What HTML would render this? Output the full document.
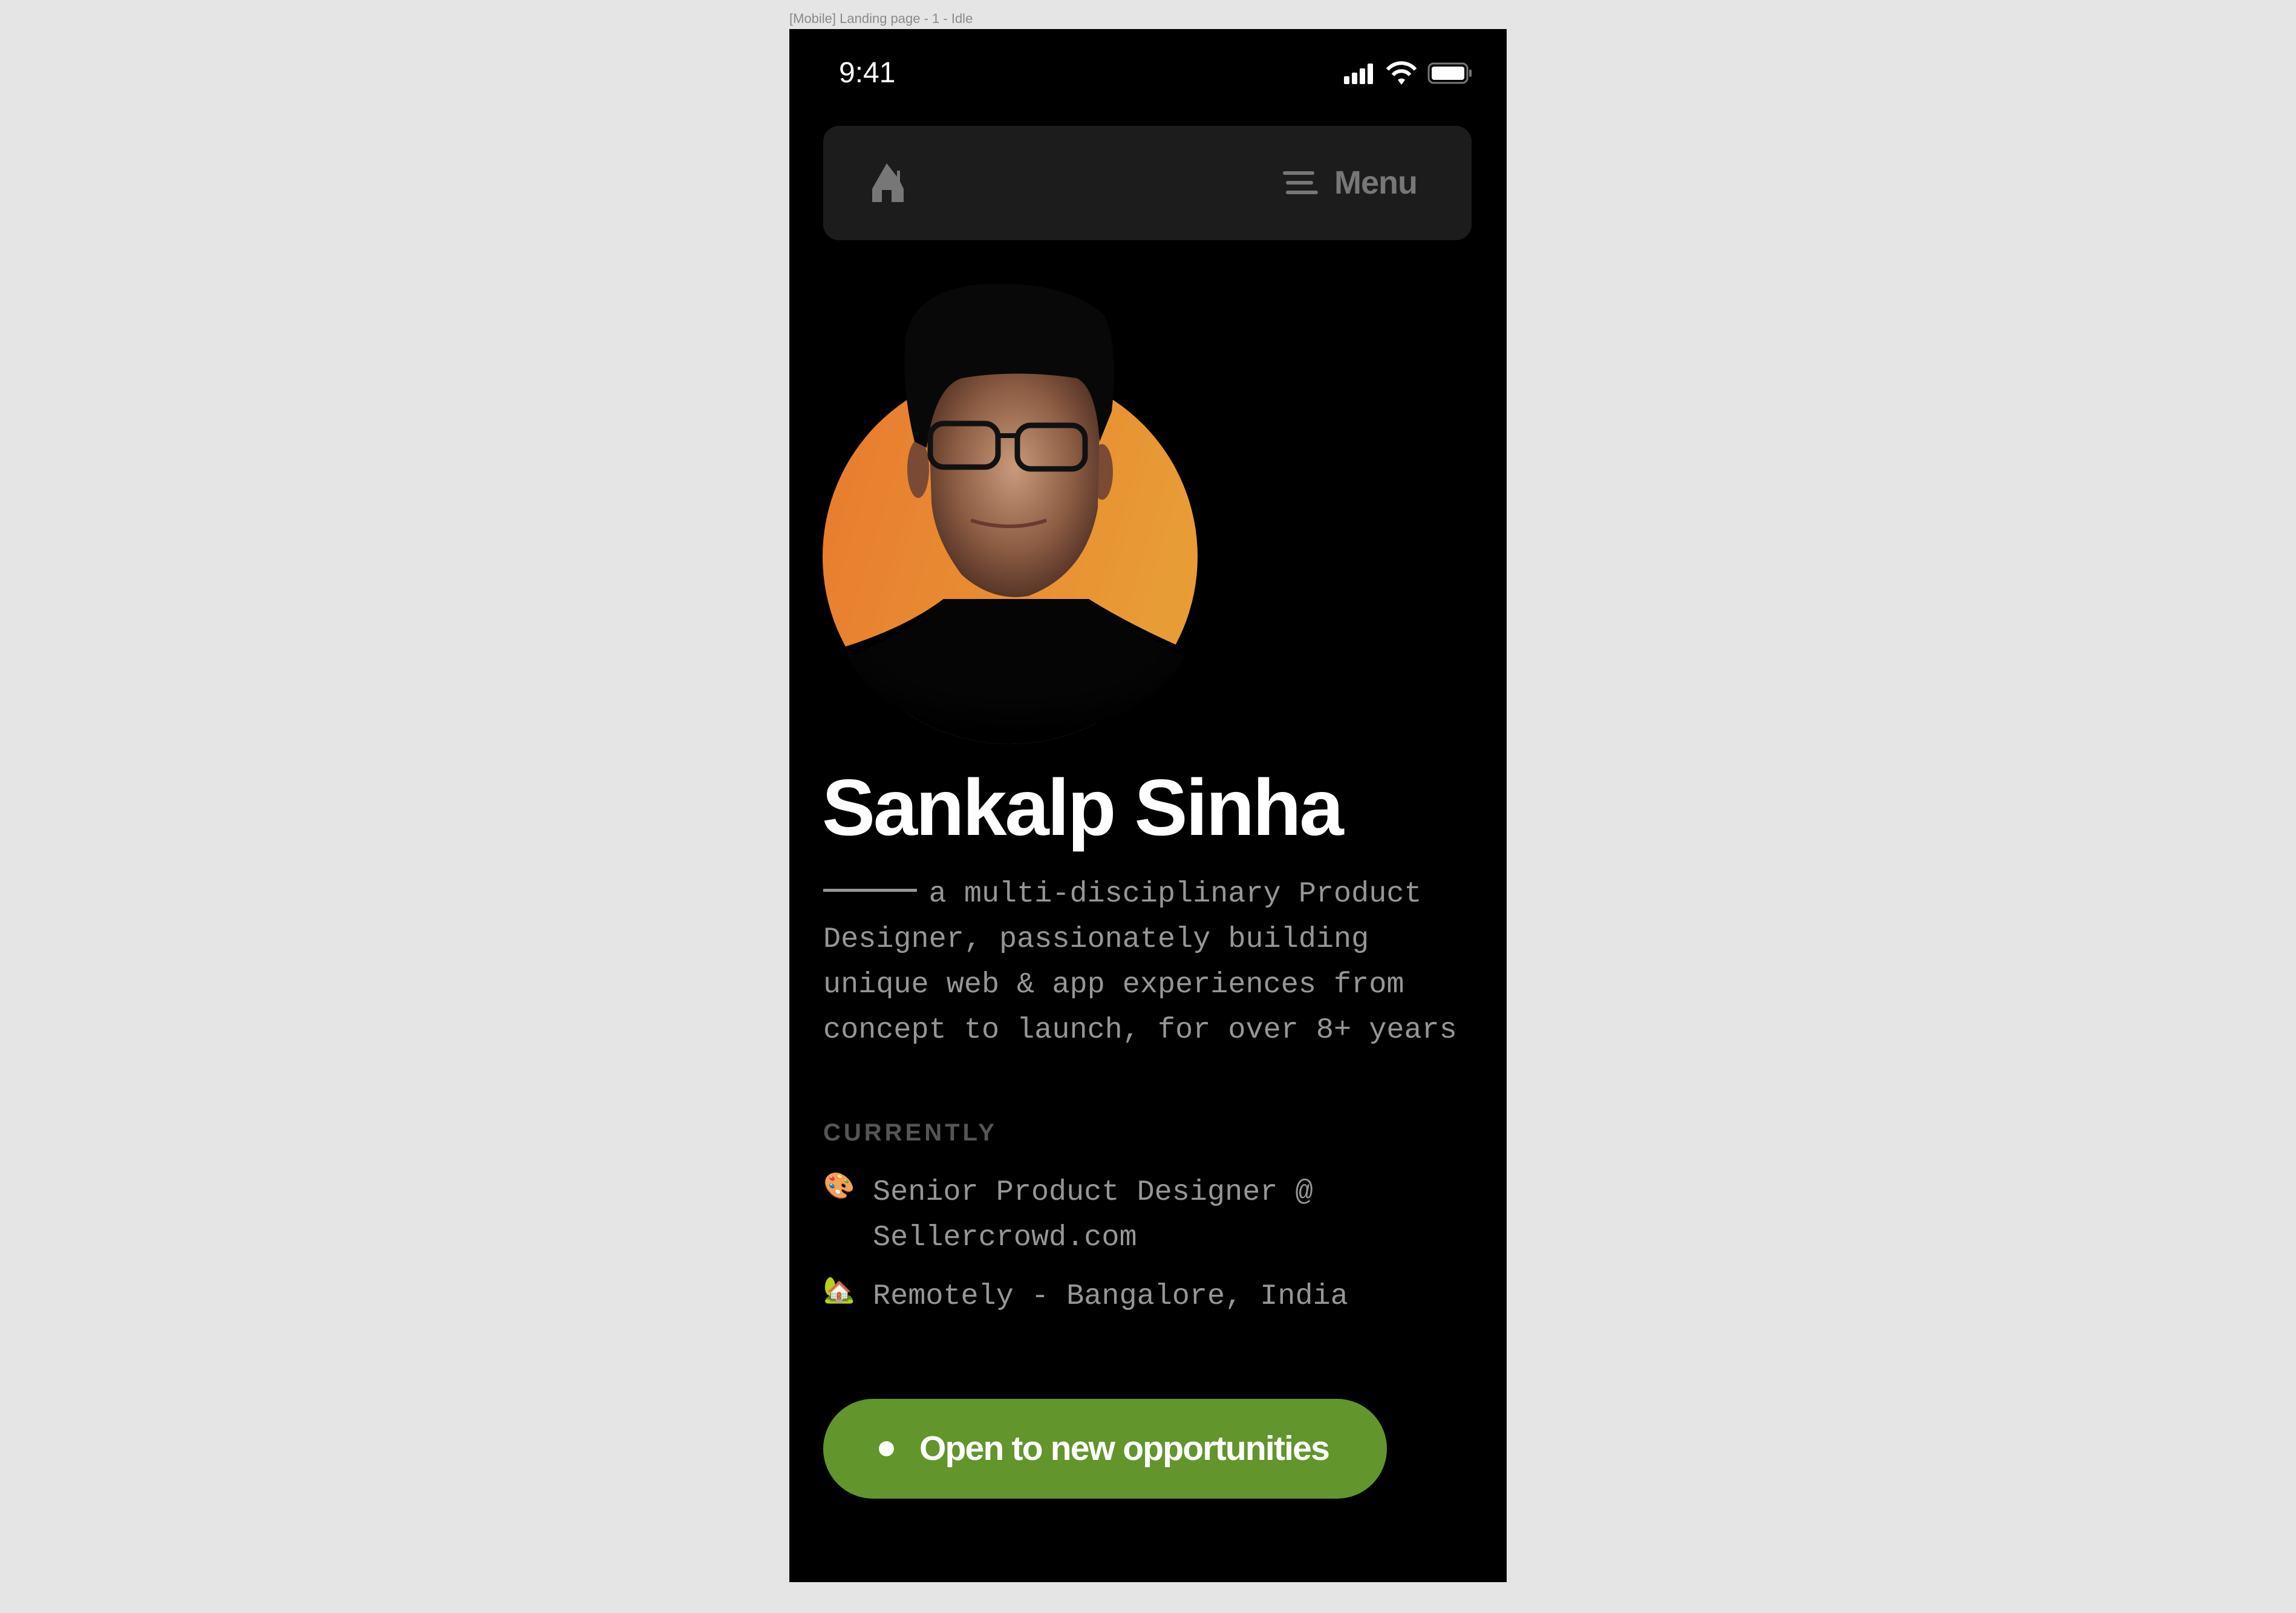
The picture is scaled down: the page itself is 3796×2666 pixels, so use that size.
<!DOCTYPE html>
<html><head><meta charset="utf-8"><style>
*{margin:0;padding:0;box-sizing:border-box}
html,body{width:3796px;height:2666px;background:#e5e5e5;overflow:hidden;position:relative;font-family:"Liberation Sans",sans-serif}
.abs{position:absolute}
.label{left:1305px;top:18px;font-size:22px;color:#8a8a8a;white-space:nowrap}
.phone{left:1305px;top:48px;width:1186px;height:2567px;background:#000}
.mono{font-family:"Liberation Mono",monospace;font-size:48.5px;color:#969696;white-space:pre}
</style></head><body>
<div class="abs label">[Mobile] Landing page - 1 - Idle</div>
<div class="abs phone"></div>
<div class="abs" style="left:1387px;top:93px;font-size:48px;color:#fff;line-height:56px">9:41</div>
<svg class="abs" style="left:2215px;top:100px" width="230" height="44" viewBox="0 0 230 44">
 <rect x="7" y="26" width="9" height="13" rx="2" fill="#fff"/>
 <rect x="20" y="20" width="9" height="19" rx="2" fill="#fff"/>
 <rect x="33" y="13" width="9" height="26" rx="2" fill="#fff"/>
 <rect x="46" y="5" width="9" height="34" rx="2" fill="#fff"/>
 <path d="M79 15 A30 30 0 0 1 125 15" stroke="#fff" stroke-width="6" fill="none"/>
 <path d="M88 24 A18 18 0 0 1 116 24" stroke="#fff" stroke-width="6" fill="none"/>
 <path d="M96 32 L102 40 L108 32 A9 9 0 0 0 96 32Z" fill="#fff"/>
 <rect x="147" y="5" width="64" height="32" rx="8" fill="none" stroke="#777" stroke-width="3"/>
 <rect x="152" y="10" width="54" height="22" rx="4" fill="#fff"/>
 <rect x="214" y="15" width="4" height="12" rx="2" fill="#777"/>
</svg>
<div class="abs" style="left:1361px;top:208px;width:1072px;height:189px;background:#1c1c1c;border-radius:26px"></div>
<svg class="abs" style="left:1438px;top:268px" width="64" height="66" viewBox="0 0 64 66">
 <path d="M28 2 L4 44 L4 66 L20 66 L20 46 L36 46 L36 66 L56 66 L56 44 L50 32 L50 14 L45 14 L45 24 Z" fill="#777"/>
</svg>
<svg class="abs" style="left:2121px;top:282px" width="64" height="42" viewBox="0 0 64 42">
 <rect x="0" y="1" width="52" height="6" rx="3" fill="#777"/>
 <rect x="5" y="17" width="45" height="6" rx="3" fill="#777"/>
 <rect x="5" y="33" width="53" height="6" rx="3" fill="#777"/>
</svg>
<div class="abs" style="left:2206px;top:270px;font-size:54px;font-weight:bold;color:#777;line-height:64px;letter-spacing:-1px">Menu</div>

<svg class="abs" style="left:1340px;top:440px" width="680" height="800" viewBox="1340 440 680 800">
 <defs>
  <linearGradient id="og" x1="0" y1="0" x2="1" y2="0.3"><stop offset="0" stop-color="#e87a2e"/><stop offset="1" stop-color="#e89c36"/></linearGradient>
  <radialGradient id="sk" cx="0.5" cy="0.45" r="0.6"><stop offset="0" stop-color="#c99a7a"/><stop offset="0.6" stop-color="#8a5a42"/><stop offset="1" stop-color="#4a2c20"/></radialGradient>
  <radialGradient id="fd" cx="0.5" cy="0.3" r="0.7"><stop offset="0.6" stop-color="#050505"/><stop offset="1" stop-color="#000"/></radialGradient>
  <clipPath id="cc"><circle cx="1670" cy="920" r="310"/></clipPath>
 </defs>
 <circle cx="1670" cy="920" r="310" fill="url(#og)"/>
 <path d="M1340 1085 Q1480 1050 1560 990 L1800 990 Q1880 1040 1990 1085 L1990 1240 L1340 1240Z" fill="#000" clip-path="url(#cc)"/>
 <path d="M1400 1085 Q1500 1050 1560 990 L1800 990 Q1870 1040 1960 1085 Q1880 1215 1670 1215 Q1470 1210 1400 1085Z" fill="url(#fd)"/>
 <ellipse cx="1518" cy="775" rx="18" ry="48" fill="#7a4a34"/>
 <ellipse cx="1822" cy="780" rx="18" ry="46" fill="#7a4a34"/>
 <path d="M1535 680 Q1540 600 1675 600 Q1815 605 1818 690 L1815 840 Q1795 950 1700 985 Q1640 995 1590 950 Q1545 890 1540 830Z" fill="url(#sk)"/>
 <path d="M1497 560 Q1510 480 1620 470 Q1760 462 1825 520 Q1850 570 1838 680 L1818 730 Q1812 640 1780 625 Q1680 610 1590 625 Q1545 640 1532 740 L1512 730 Q1490 640 1497 560Z" fill="#080808"/>
 <rect x="1538" y="700" width="112" height="72" rx="22" fill="none" stroke="#111" stroke-width="9"/>
 <rect x="1682" y="703" width="112" height="72" rx="22" fill="none" stroke="#111" stroke-width="9"/>
 <path d="M1650 720 L1682 720" stroke="#111" stroke-width="8"/>
 <path d="M1605 860 Q1670 880 1730 860" stroke="#6a3a30" stroke-width="6" fill="none"/>
</svg>

<div class="abs" style="left:1359px;top:1255px;font-size:132px;font-weight:bold;color:#fff;letter-spacing:-3.3px;line-height:160px;white-space:nowrap">Sankalp Sinha</div>
<div class="abs" style="left:1361px;top:1469px;width:155px;height:5px;background:#969696"></div>
<div class="abs mono" style="left:1361px;top:1440px;line-height:75px"><div>      a multi-disciplinary Product</div><div>Designer, passionately building</div><div>unique web &amp; app experiences from</div><div>concept to launch, for over 8+ years</div></div>
<div class="abs" style="left:1361px;top:1848px;font-size:40px;font-weight:bold;color:#555;letter-spacing:5px;line-height:48px">CURRENTLY</div>
<div class="abs" style="left:1361px;top:1935px;font-size:42px;line-height:50px">🎨</div>
<div class="abs mono" style="left:1443px;top:1933px;line-height:75px"><div>Senior Product Designer @</div><div>Sellercrowd.com</div></div>
<div class="abs" style="left:1361px;top:2107px;font-size:42px;line-height:50px">🏡</div>
<div class="abs mono" style="left:1443px;top:2105px;line-height:75px">Remotely - Bangalore, India</div>
<div class="abs" style="left:1361px;top:2312px;width:932px;height:165px;border-radius:83px;background:#62952b"></div>
<div class="abs" style="left:1453px;top:2382px;width:25px;height:25px;border-radius:50%;background:#fff"></div>
<div class="abs" style="left:1520px;top:2360px;font-size:57px;font-weight:bold;color:#fff;letter-spacing:-1.8px;line-height:68px;white-space:nowrap">Open to new opportunities</div>
</body></html>
